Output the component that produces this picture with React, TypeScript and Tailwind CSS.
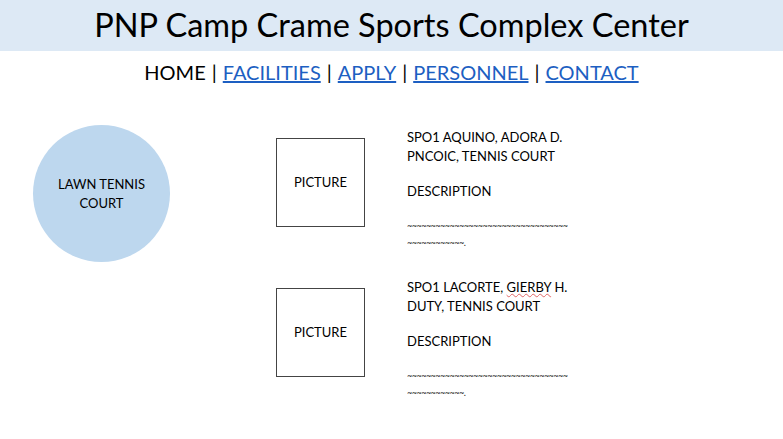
export default function App() {
  const staff = [
    { pre: 'SPO1 LACORTE, ', flagged: '', name: 'SPO1 AQUINO, ADORA D.', role: 'PNCOIC, TENNIS COURT' },
    { pre: 'SPO1 LACORTE, ', flagged: 'GIERBY', name: 'SPO1 LACORTE, GIERBY H.', role: 'DUTY, TENNIS COURT' },
  ];

  return (
    <div className="w-[783px] h-[439px] bg-white text-black font-['Lato',sans-serif]">
      {/* Header */}
      <div className="h-[51px] bg-[#dde9f5] flex items-center justify-center">
        <h1 className="text-[32.5px] leading-none">PNP Camp Crame Sports Complex Center</h1>
      </div>

      {/* Nav */}
      <div className="mt-[9px] flex justify-center text-[20px] leading-[24px]">
        <span>HOME</span>
        <span className="mx-[6px]">|</span>
        <a href="#" className="text-[#1d5fc2] underline">FACILITIES</a>
        <span className="mx-[6px]">|</span>
        <a href="#" className="text-[#1d5fc2] underline">APPLY</a>
        <span className="mx-[6px]">|</span>
        <a href="#" className="text-[#1d5fc2] underline">PERSONNEL</a>
        <span className="mx-[6px]">|</span>
        <a href="#" className="text-[#1d5fc2] underline">CONTACT</a>
      </div>

      {/* Content */}
      <div className="flex mt-[54px] pl-[33px]">
        <div className="w-[137px] h-[137px] mt-[-13px] rounded-full bg-[#bdd7ee] flex items-center justify-center text-center text-[13px] leading-[19px]">
          LAWN TENNIS<br />COURT
        </div>

        <div className="ml-[106px] flex flex-col">
          {staff.map((s) => (
            <div key={s.name} className="flex h-[150px]">
              <div className="w-[89px] h-[89px] border border-[#444] flex items-center justify-center text-[13px]">
                PICTURE
              </div>
              <div className="ml-[42px] mt-[-10px] text-[13px] leading-[19px]">
                {s.flagged ? (
                  <p>
                    {s.pre}
                    <span className="underline decoration-wavy decoration-[#e06666] decoration-1">{s.flagged}</span> H.
                  </p>
                ) : (
                  <p>{s.name}</p>
                )}
                <p>{s.role}</p>
                <p className="mt-[16px]">DESCRIPTION</p>
                <p className="mt-[15px] text-[9px] leading-[19px] tracking-[-0.5px] text-[#222]">~~~~~~~~~~~~~~~~~~~~~~~~~~~~~~~~~~</p>
                <p className="mt-[-2px] text-[9px] leading-[19px] tracking-[-0.5px] text-[#222]">~~~~~~~~~~~~.</p>
              </div>
            </div>
          ))}
        </div>
      </div>
    </div>
  );
}
